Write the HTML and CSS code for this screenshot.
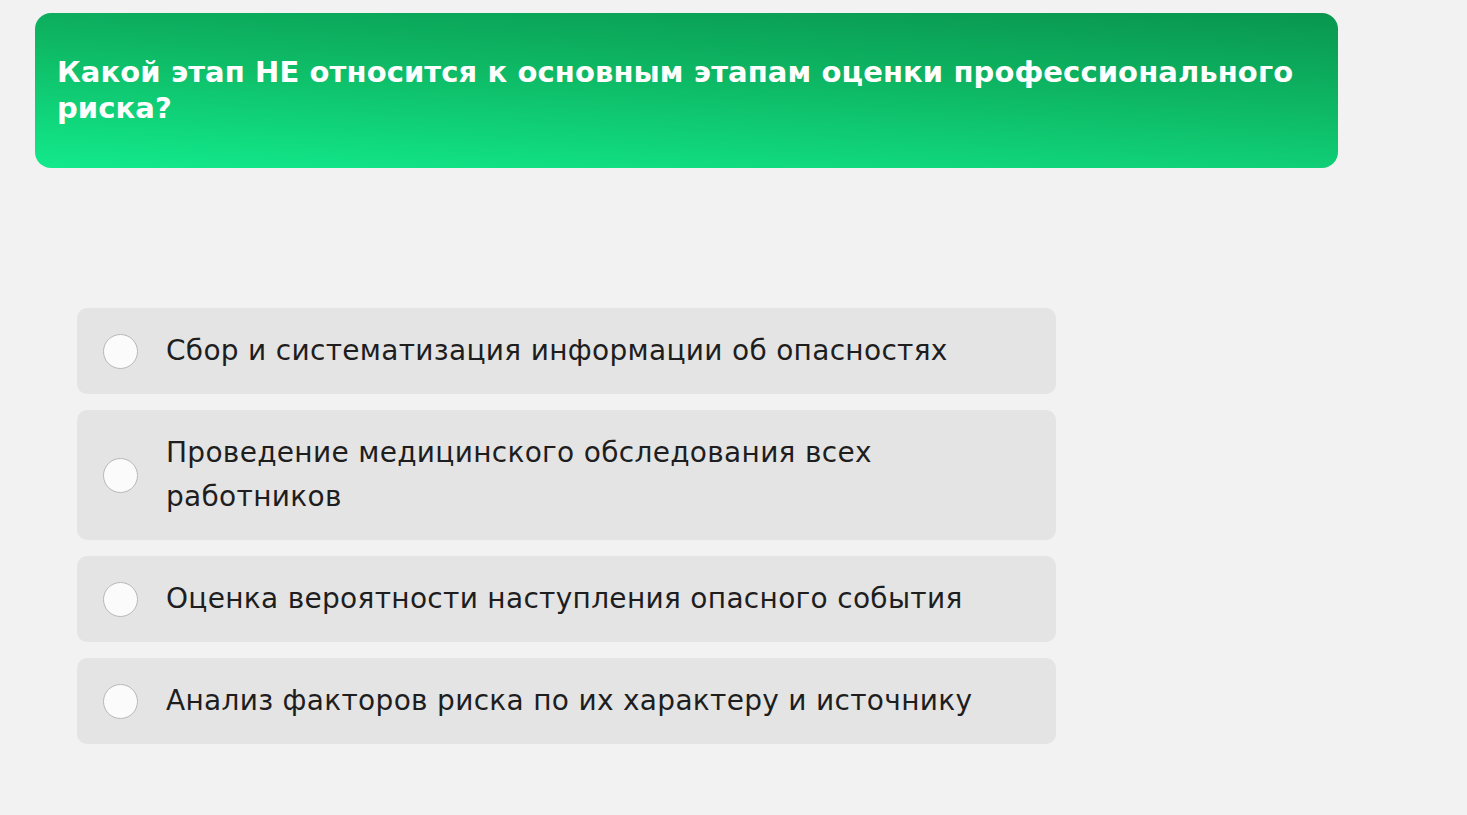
FILE: index.html
```html
<!DOCTYPE html>
<html lang="ru">
<head>
    <meta charset="UTF-8">
    <meta name="viewport" content="width=device-width, initial-scale=1.0">
    <title>Тест: оценка профессионального риска</title>
    <link rel="stylesheet" href="styles.css">
</head>
<body>
    <div class="quiz">
        <div class="question">
            <h1>Какой этап НЕ относится к основным этапам оценки профессионального риска?</h1>
        </div>

        <form class="answers">
            <label class="answer">
                <input type="radio" name="answer" value="1">
                <span class="radio"></span>
                <span class="answer-text">Сбор и систематизация информации об опасностях</span>
            </label>
            <label class="answer">
                <input type="radio" name="answer" value="2">
                <span class="radio"></span>
                <span class="answer-text">Проведение медицинского обследования всех работников</span>
            </label>
            <label class="answer">
                <input type="radio" name="answer" value="3">
                <span class="radio"></span>
                <span class="answer-text">Оценка вероятности наступления опасного события</span>
            </label>
            <label class="answer">
                <input type="radio" name="answer" value="4">
                <span class="radio"></span>
                <span class="answer-text">Анализ факторов риска по их характеру и источнику</span>
            </label>
        </form>
    </div>
</body>
</html>
```

FILE: styles.css
```css
html, body {
    margin: 0;
    background: #f2f2f2;
}

body {
    font-family: "DejaVu Sans", "Noto Sans", sans-serif;
    color: #1e1e1e;
}

.quiz {
    padding: 13px 35px 40px;
    width: 1303px;
}

.question {
    background: linear-gradient(183deg, #09964f 0%, #0eb965 45%, #12ea8b 100%);
    border-radius: 16px;
    padding: 41px 10px 42px 22px;
}

.question h1 {
    margin: 0;
    color: #fff;
    font-size: 29px;
    font-weight: 700;
    line-height: 36px;
    letter-spacing: 0.1px;
}

.answers {
    margin: 140px 0 0 42px;
    width: 979px;
    display: flex;
    flex-direction: column;
    gap: 16px;
}

.answer {
    display: flex;
    align-items: center;
    background: #e4e4e4;
    border-radius: 10px;
    padding: 21px 80px 21px 26px;
    cursor: pointer;
}

.answer input {
    display: none;
}

.radio {
    flex: none;
    width: 33px;
    height: 33px;
    border-radius: 50%;
    background: #fbfbfb;
    border: 1.5px solid #b8b8b8;
    margin-right: 28px;
}

.answer input:checked + .radio {
    border: 10px solid #0cc873;
    width: 16px;
    height: 16px;
}

.answer-text {
    font-size: 28px;
    line-height: 44px;
    letter-spacing: 0.3px;
}
```
